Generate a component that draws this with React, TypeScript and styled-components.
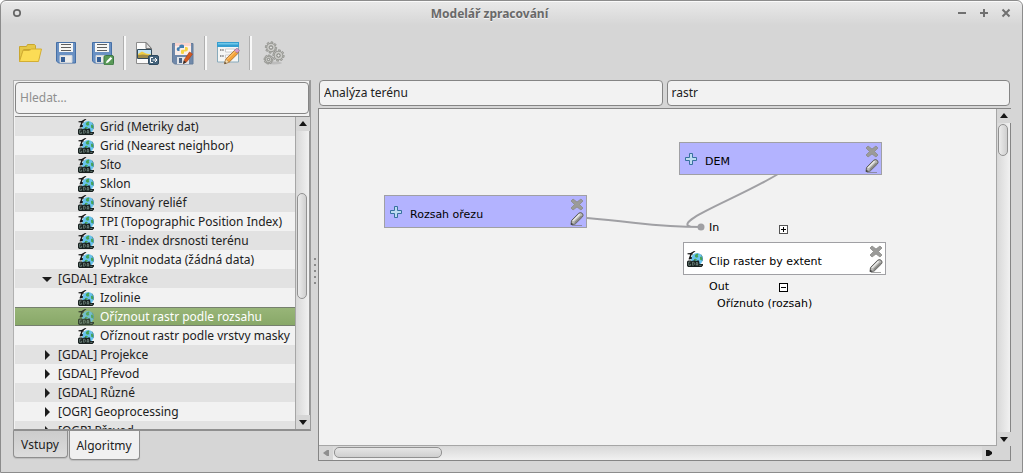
import React from "react";
import styled, { createGlobalStyle, css } from "styled-components";

const Global = createGlobalStyle`
  *, *::before, *::after { box-sizing: border-box; }
  html, body, #root { height: 100%; }
  body { margin: 0; background: #fff; overflow: hidden; }
  body, button, input { font-family: "Noto Sans", "Open Sans", sans-serif; font-size: 12px; color: #212121; }
  button { border: 0; padding: 0; background: none; }
  ul { list-style: none; margin: 0; padding: 0; }
  svg { display: block; flex: none; }
`;

const Window = styled.main`
  display: flex;
  flex-direction: column;
  height: 100%;
  border: 1px solid #8c8c8c;
  border-radius: 6px 6px 0 0;
  background: linear-gradient(#e9e9e9, #d6d6d6 24px);
  box-shadow: inset 0 1px 0 #fafafa;
`;

const TitleBar = styled.header`
  display: flex;
  align-items: center;
  height: 24px;
  padding: 0 9px;
  flex: none;
`;

const Title = styled.h1`
  flex: 1;
  margin: 0;
  padding-top: 2px;
  text-align: center;
  font-size: 12px;
  line-height: 18px;
  font-weight: 700;
  color: #696969;
  text-shadow: 0 1px 0 #f4f4f4;
`;

const WindowButtons = styled.div`
  display: flex;
  gap: 8px;
`;

const WindowButton = styled.button`
  width: 14px;
  height: 14px;
`;

const Toolbar = styled.div`
  display: flex;
  align-items: center;
  height: 55px;
  padding: 0 11px;
  flex: none;
`;

const ToolButton = styled.button`
  display: grid;
  place-items: center;
  width: 36px;
  height: 36px;
`;

const ToolSeparator = styled.span`
  width: 3px;
  height: 34px;
  margin: 0 3px;
  border-left: 1px solid #b0b0b0;
  border-right: 2px solid #f8f8f8;
`;

const Body = styled.div`
  display: flex;
  flex: 1;
  min-height: 0;
  padding: 0 11px 11px 12px;
`;

const Sidebar = styled.aside`
  display: flex;
  flex-direction: column;
  width: 298px;
  flex: none;
`;

const AlgorithmPanel = styled.section`
  display: flex;
  flex-direction: column;
  flex: 1;
  min-height: 0;
  gap: 2px;
  border: 1px solid #b0b0b0;
  border-right: 2px solid #999;
  border-bottom: 2px solid #8f8f8f;
  padding: 1px 0 0 1px;
  background: #f2f2f2;
`;

const TextInput = styled.input<{ $large?: boolean }>`
  flex: ${(p) => (p.$large ? "none" : "1")};
  min-width: 0;
  height: ${(p) => (p.$large ? 32 : 26)}px;
  padding: 0 4px 2px;
  border: 1px solid #858585;
  border-radius: 4px;
  background: #f2f2f2;
  outline: 0;
  &::placeholder { color: #8f8f8f; opacity: 1; }
`;

const TreeFrame = styled.div`
  display: flex;
  flex: 1;
  min-height: 0;
  border-top: 1px solid #8a8a8a;
`;

const Tree = styled.ul`
  flex: 1;
  min-width: 0;
  overflow: hidden;
`;

const TreeRow = styled.li<{ $group?: boolean; $selected?: boolean }>`
  display: flex;
  align-items: center;
  gap: 6px;
  height: 19px;
  padding-left: ${(p) => (p.$group ? 27 : 63)}px;
  line-height: 18px;
  white-space: nowrap;
  background: #f2f2f2;
  &:nth-child(odd) { background: #e2e2e2; }
  ${(p) => p.$selected && css`
    && {
      color: #fff;
      background: linear-gradient(#98b578, #88a868);
      border-top: 1px solid #76806e;
      border-bottom: 1px solid #76806e;
    }
    svg { opacity: 0.75; }
  `}
`;

const Bar = styled.div<{ $horizontal?: boolean }>`
  display: flex;
  flex: none;
  ${(p) => p.$horizontal
    ? css`height: 15px; flex-direction: row; background: linear-gradient(#d8d8d8, #f1f1f1); border-top: 1px solid #a6a6a6;`
    : css`width: 14px; flex-direction: column; background: linear-gradient(90deg, #d8d8d8, #f1f1f1); border-left: 1px solid #a6a6a6;`}
`;

const BarButton = styled.button`
  display: grid;
  place-items: center;
  width: 14px;
  height: 14px;
  flex: none;
  background: #d6d6d6;
`;

const Track = styled.div<{ $horizontal?: boolean; $before: number }>`
  display: flex;
  flex: 1;
  min-width: 0;
  min-height: 0;
  flex-direction: ${(p) => (p.$horizontal ? "row" : "column")};
  padding: ${(p) => (p.$horizontal ? `1px 1px 2px ${p.$before}px` : `${p.$before}px 2px 1px 1px`)};
`;

const Thumb = styled.span<{ $horizontal?: boolean; $length: number }>`
  border: 1px solid #919191;
  border-radius: 5px;
  ${(p) => p.$horizontal
    ? css`width: ${p.$length}px; background: linear-gradient(#e6e6e6, #cfcfcf);`
    : css`height: ${p.$length}px; background: linear-gradient(90deg, #ececec, #cfcfcf);`}
`;

const Tabs = styled.div`
  display: flex;
  align-items: flex-start;
  gap: 1px;
  height: 30px;
  flex: none;
`;

const Tab = styled.button<{ $active?: boolean }>`
  width: ${(p) => (p.$active ? 71 : 55)}px;
  height: ${(p) => (p.$active ? 29 : 27)}px;
  padding: 1px 1px 0 0;
  border: 1px solid #8e8e8e;
  border-top: 0;
  border-radius: 0 0 4px 4px;
  background: ${(p) => (p.$active ? "#f0f0f0" : "linear-gradient(#cccccc, #dcdcdc)")};
  box-shadow: 0 1px 1px #bcbcbc;
`;

const Splitter = styled.div`
  display: flex;
  flex-direction: column;
  align-items: center;
  justify-content: center;
  gap: 4px;
  width: 7px;
  flex: none;
  i { width: 2px; height: 2px; background: #8a8a8a; }
`;

const Editor = styled.section`
  display: flex;
  flex-direction: column;
  flex: 1;
  min-width: 0;
  gap: 2px;
`;

const Fields = styled.div`
  display: flex;
  gap: 4px;
  padding: 0 1px;
  flex: none;
`;

const CanvasFrame = styled.div`
  display: flex;
  flex: 1;
  min-height: 0;
  border: 1px solid #858585;
  background: #d6d6d6;
`;

const CanvasColumn = styled.div`
  display: flex;
  flex-direction: column;
  flex: 1;
  min-width: 0;
`;

const VerticalColumn = styled.div`
  display: flex;
  padding-bottom: 14px;
`;

const Canvas = styled.div`
  position: relative;
  flex: 1;
  overflow: hidden;
  background: #f2f2f2;
  font-family: "DejaVu Sans", sans-serif;
  font-size: 11px;
  line-height: 14px;
  color: #000;
`;

const Links = styled.svg`
  position: absolute;
  inset: 0;
`;

const Placed = styled.div<{ $x: number; $y: number }>`
  position: absolute;
  left: ${(p) => p.$x}px;
  top: ${(p) => p.$y}px;
`;

const NodeBox = styled.div<{ $input?: boolean }>`
  display: flex;
  align-items: center;
  gap: ${(p) => (p.$input ? 8 : 6)}px;
  width: 203px;
  height: 33px;
  padding: 0 1px 0 ${(p) => (p.$input ? 5 : 3)}px;
  border: 1px solid #a0a0a4;
  background: ${(p) => (p.$input ? "#b3b3ff" : "#fff")};
`;

const NodeLabel = styled.span`
  flex: 1;
  padding-top: 6px;
  white-space: nowrap;
`;

const NodeTools = styled.span`
  display: flex;
  flex-direction: column;
  button { display: grid; place-items: center; width: 16px; height: 15px; }
`;

const PortRow = styled.div`
  display: flex;
  align-items: center;
  justify-content: space-between;
  width: 105px;
  height: 24px;
  padding-left: 26px;
`;

const InputPort = styled(PortRow)`
  height: 21px;
  align-items: flex-start;
  button { margin-top: 4px; }
`;

const Toggle = styled.button`
  width: 9px;
  height: 9px;
`;

const OutputName = styled.div`
  padding-left: 34px;
  margin-top: -2px;
  white-space: nowrap;
`;

const PortGroup = styled.div`
  display: flex;
  flex-direction: column;
`;

const GdalIcon = () => (
  <svg width="16" height="16" viewBox="0 0 16 16">
    <circle cx="10" cy="8" r="6" fill="#68c3ee" />
    <path d="M8.500 3.500l2-1 1 .8-.8 1 .6 1.500-1.300 1-1.500-.5-.8-1.300zM13 6l1.500-.5 1 2.500-.8 1.500-1.500-.8zM7 8l1.800-.2 1.200 1-1 1H7z" fill="#45a252" />
    <path d="M14 3.500q2.300 2.500 1.700 6.500" fill="none" stroke="#4a8596" strokeWidth=".7" />
    <path d="M7 0l1.500.3-3 2.200.5 1.100-1.200-.1-1 2.300L5 6.500v1L3 8.500l-1.500-.3 1.700-4.600L.5 3.200v-.9l3-.4z" fill="#151515" />
    <path d="M0 11q0-1.500 1.500-1.500H4l.8.800 1.200-.8h2l1 .8 1-.8h2l.6 3.500H16v1.500L14.500 16H1l-1-1.200z" fill="#18201f" />
    <path d="M3.500 11H1.700v3.300h1.900v-1.500M5.600 11v3.300h.8l.9-.9v-1.500l-.8-.9zM9.200 14.600v-2.600l.7-1 .8 1v2.600M9.300 13.300h1.300M12.300 14.400h2.100" fill="none" stroke="#94aea5" strokeWidth=".6" />
  </svg>
);

const GroupArrow = ({ open }: { open?: boolean }) => (
  <svg width="10" height="10" viewBox="0 0 10 10">
    <path d={open ? "M0 3h10L5 8z" : "M3 0v10l5-5z"} fill="#1c1c1c" />
  </svg>
);

const arrows = { up: "M4 1l4 5H0z", down: "M0 2h8L4 7z", left: "M7 1v6H5L1 4l4-3z", right: "M1 1v6h3l3-2V3L4 1z" };
const ArrowGlyph = ({ dir, dim }: { dir: keyof typeof arrows; dim?: boolean }) => (
  <svg width="8" height="8" viewBox="0 0 8 8"><path d={arrows[dir]} fill={dim ? "#8f8f8f" : "#151515"} /></svg>
);

const FolderIcon = () => (
  <svg width="24" height="24" viewBox="0 0 24 24">
    <path d="M1.500 20.500V5.500h7l1-2h7l1 1v4h-12z" fill="#e6c847" stroke="#c9a62f" />
    <path d="M1.500 20.500l3.500-11h6.500l2-1.500h10l-3 12.500z" fill="#fcdc55" stroke="#d3ae33" strokeLinejoin="round" />
  </svg>
);

const Floppy = () => (
  <>
    <path d="M2.500 1.500h19v20.500h-17l-2-2z" fill="#6a91c3" stroke="#4670a7" strokeLinejoin="round" />
    <path d="M5 2h14v9H5z" fill="#f6f6f4" />
    <path d="M7 3.500h10M7 6.500h10M7 9.500h10" stroke="#5e5e5e" />
    <path d="M6 14.500h12v7H6z" fill="#ececeb" stroke="#d1d5da" />
    <path d="M7 16h4v5H7z" fill="#365f96" />
  </>
);

const SaveIcon = () => <svg width="24" height="24" viewBox="0 0 24 24"><Floppy /></svg>;

const SaveAsIcon = () => (
  <svg width="24" height="24" viewBox="0 0 24 24">
    <Floppy />
    <rect x="14" y="14.500" width="9.500" height="9.500" rx="1.500" fill="#5a9a58" stroke="#3c7745" />
    <path d="M16 22.300l.6-2.300 4-4 1.600 1.500-4 4z" fill="#fff" />
  </svg>
);

const ExportIcon = () => (
  <svg width="24" height="24" viewBox="0 0 24 24">
    <path d="M1.500 1.500H11l5.500 6v15h-15z" fill="#fbfbfb" stroke="#8c8c8c" />
    <path d="M11 1.500v6h5.500z" fill="#dfdfdf" stroke="#777" />
    <path d="M2.500 8.500h14v9h-14z" fill="#c1e1f3" stroke="#334b5a" />
    <path d="M3 13l4-2.500 4 2 5 1v1H3z" fill="#efcd43" /><path d="M3 14l5-.5 8 1V17H3z" fill="#9d8a48" />
    <rect x="13.500" y="14.500" width="10" height="9" rx="1.500" fill="#46647c" stroke="#2d495f" />
    <path d="M18 16.500h-2.500v5H18M17.500 19h4.500M20 17l2 2-2 2" fill="none" stroke="#fff" />
  </svg>
);

const PythonIcon = () => (
  <svg width="24" height="24" viewBox="0 0 24 24">
    <path d="M1.500 2.500h20.500V23H3.500l-2-2z" fill="#7189aa" stroke="#657c9b" />
    <path d="M4 2h16v12H4z" fill="#fbeee9" /><path d="M4 2h16v3H4z" fill="#fbd5ce" />
    <path d="M6 16h12v7H6z" fill="#e2e4e7" /><path d="M8 17h3v5H8z" fill="#4c6485" />
    <path d="M8.500 10V8q0-1 1.500-1h3V4.500q-.2-1-2.500-1T8.300 5v1.300H7Q5.500 6.500 5.700 8.500 6 10.500 8.500 10z" fill="#427eb1" />
    <path d="M10 12.300V10q0-1.300 1.500-1.300H14V6h1.500q1.500 0 1.500 2t-2 2.500h-2V12q0 1-1.500 1T10 12.300z" fill="#f7d343" />
    <path d="M12.500 22.500l1-4 5-7.500 3 2-5.500 7.500z" fill="#d55a20" stroke="#a94420" strokeWidth=".7" />
    <path d="M12 23l.8-3.500 2.500 1.800z" fill="#313131" />
  </svg>
);

const FormIcon = () => (
  <svg width="24" height="24" viewBox="0 0 24 24">
    <path d="M1.500 1.500h21V21h-21z" fill="#f5f6f5" stroke="#88aabb" />
    <path d="M1 1h22v5H1z" fill="#359ed0" /><path d="M2 2h20v1.500H2z" fill="#70c8e9" />
    <path d="M4 9h4M4 15h4" stroke="#999" strokeWidth="2" strokeDasharray="1.500 .7" />
    <path d="M9.500 8h9v3h-9zM9.500 14h6v3h-6z" fill="#fff" stroke="#c2c2c2" strokeWidth=".8" />
    <path d="M8.500 22.700l1.300-4.600L19.500 8.500l3.200 3.200-9.600 9.500z" fill="#f6a43b" stroke="#a46829" strokeWidth=".8" />
    <path d="M18.200 9.700l2-2.200q2-.6 3.300 2.200L21.300 12z" fill="#d99acb" stroke="#937294" strokeWidth=".7" />
    <path d="M8.500 22.700l1.300-4.600 3.300 3.100z" fill="#f3ddb2" stroke="#98764e" strokeWidth=".5" /><path d="M8.500 22.700l.5-1.700 1.200 1.200z" fill="#222" />
    <path d="M11 18.500l8.500-8.500" stroke="#ffd489" />
  </svg>
);

const Gear = ({ x, y, r }: { x: number; y: number; r: number }) => (
  <g transform={`translate(${x} ${y})`}>
    {Array.from({ length: 8 }, (_, i) => (
      <rect key={i} x="-1" y={-r - 1.2} width="2" height="3" fill="#b8b8b5" stroke="#858681" strokeWidth=".6" transform={`rotate(${i * 45 + 10})`} />
    ))}
    <circle r={r - 0.4} fill="#bdbdb9" stroke="#858681" strokeWidth=".5" />
    <circle r={r - 1.3} fill="none" stroke="#d3d3d0" strokeWidth=".8" />
    <circle r={r * 0.36} fill="#e1e1df" stroke="#72736f" strokeWidth=".8" />
  </g>
);

const GearsIcon = () => (
  <svg width="24" height="24" viewBox="0 0 24 24">
    <ellipse cx="13" cy="22" rx="8" ry="1.500" fill="#bdbdbd" />
    <Gear x={10} y={6.5} r={4.5} /><Gear x={17.500} y={14.500} r={4.500} /><Gear x={7.500} y={18.500} r={3.300} />
  </svg>
);

const PlusIcon = () => (
  <svg width="12" height="12" viewBox="0 0 12 12">
    <path d="M4.500.5h3v4h4v3h-4v4h-3v-4h-4v-3h4z" fill="#bddcf1" stroke="#39719f" />
  </svg>
);

const CrossIcon = () => (
  <svg width="14" height="13" viewBox="0 0 14 13">
    <path d="M1 3l2-2 4 3 4-3 2 2-3.500 3.500L13 10l-2 2-4-3-4 3-2-2 3.500-3.500z" fill="#9b9b99" stroke="#8b8b89" strokeWidth=".8" strokeLinejoin="round" />
  </svg>
);

const PencilIcon = () => (
  <svg width="14" height="14" viewBox="0 0 14 14">
    <path d="M2 13.500h10" stroke="#777" strokeOpacity=".65" />
    <path d="M1 12.700l.5-4.200L8.700 1.200q2-1.300 3.600.2 1.500 1.600.2 3.400L5.200 12z" fill="#b9b9b6" stroke="#5c5c5a" strokeLinejoin="round" />
    <path d="M3 8.900l6.700-6.600" stroke="#ececea" strokeWidth="1.300" />
    <path d="M4.800 10.700L11.700 4" stroke="#858582" strokeWidth="1.300" /><path d="M1 12.700l.4-2 1.600 1.400z" fill="#333" />
  </svg>
);

const ToggleGlyph = ({ plus }: { plus?: boolean }) => (
  <svg width="9" height="9" viewBox="0 0 9 9" shapeRendering="crispEdges">
    <rect x=".5" y=".5" width="8" height="8" fill="#fff" stroke={plus ? "#555" : "#000"} />
    <path d={plus ? "M2 4.500h5M4.500 2v5" : "M2 4.500h5"} stroke="#000" />
  </svg>
);

const ScrollBar = ({ horizontal, before, length, dim }: { horizontal?: boolean; before: number; length: number; dim?: boolean }) => (
  <Bar $horizontal={horizontal}>
    <BarButton aria-label={horizontal ? "Doleva" : "Nahoru"}><ArrowGlyph dir={horizontal ? "left" : "up"} dim={dim} /></BarButton>
    <Track $horizontal={horizontal} $before={before}><Thumb $horizontal={horizontal} $length={length} /></Track>
    <BarButton aria-label={horizontal ? "Doprava" : "Dolů"}><ArrowGlyph dir={horizontal ? "right" : "down"} /></BarButton>
  </Bar>
);

const ModelNode = ({ label, input }: { label: string; input?: boolean }) => (
  <NodeBox $input={input}>
    {input ? <PlusIcon /> : <GdalIcon />}
    <NodeLabel>{label}</NodeLabel>
    <NodeTools>
      <button aria-label={`Odstranit ${label}`}><CrossIcon /></button>
      <button aria-label={`Upravit ${label}`}><PencilIcon /></button>
    </NodeTools>
  </NodeBox>
);

type Item = { label: string; group?: boolean; open?: boolean; selected?: boolean };
const items: Item[] = [
  { label: "Grid (Metriky dat)" },
  { label: "Grid (Nearest neighbor)" },
  { label: "Síto" },
  { label: "Sklon" },
  { label: "Stínovaný reliéf" },
  { label: "TPI (Topographic Position Index)" },
  { label: "TRI - index drsnosti terénu" },
  { label: "Vyplnit nodata (žádná data)" },
  { label: "[GDAL] Extrakce", group: true, open: true },
  { label: "Izolinie" },
  { label: "Oříznout rastr podle rozsahu", selected: true },
  { label: "Oříznout rastr podle vrstvy masky" },
  { label: "[GDAL] Projekce", group: true },
  { label: "[GDAL] Převod", group: true },
  { label: "[GDAL] Různé", group: true },
  { label: "[OGR] Geoprocessing", group: true },
  { label: "[OGR] Převod", group: true },
];

export default function App() {
  return (
    <>
      <Global />
      <Window>
        <TitleBar>
          <WindowButtons>
            <WindowButton aria-label="Nabídka okna">
              <svg width="14" height="14" viewBox="0 0 14 14"><circle cx="7" cy="7" r="3.200" fill="none" stroke="#666" strokeWidth="1.700" /></svg>
            </WindowButton>
          </WindowButtons>
          <Title>Modelář zpracování</Title>
          <WindowButtons>
            <WindowButton aria-label="Minimalizovat"><svg width="14" height="14"><path d="M3 7h8" stroke="#707070" strokeWidth="2" /></svg></WindowButton>
            <WindowButton aria-label="Maximalizovat"><svg width="14" height="14"><path d="M3 7h8M7 3v8" stroke="#707070" strokeWidth="2" /></svg></WindowButton>
            <WindowButton aria-label="Zavřít"><svg width="14" height="14"><path d="M3.500 3.500l7 7M10.500 3.500l-7 7" stroke="#707070" strokeWidth="2" /></svg></WindowButton>
          </WindowButtons>
        </TitleBar>
        <Toolbar role="toolbar">
          <ToolButton aria-label="Otevřít"><FolderIcon /></ToolButton>
          <ToolButton aria-label="Uložit"><SaveIcon /></ToolButton>
          <ToolButton aria-label="Uložit jako"><SaveAsIcon /></ToolButton>
          <ToolSeparator />
          <ToolButton aria-label="Exportovat obrázek"><ExportIcon /></ToolButton>
          <ToolButton aria-label="Exportovat Python"><PythonIcon /></ToolButton>
          <ToolSeparator />
          <ToolButton aria-label="Upravit nápovědu"><FormIcon /></ToolButton>
          <ToolSeparator />
          <ToolButton aria-label="Spustit"><GearsIcon /></ToolButton>
        </Toolbar>
        <Body>
          <Sidebar>
            <AlgorithmPanel>
              <TextInput $large placeholder="Hledat…" aria-label="Hledat" />
              <TreeFrame>
                <Tree role="tree">
                  {items.map((item) => (
                    <TreeRow key={item.label} role="treeitem" $group={item.group} $selected={item.selected}>
                      {item.group ? <GroupArrow open={item.open} /> : <GdalIcon />}
                      <span>{item.label}</span>
                    </TreeRow>
                  ))}
                </Tree>
                <ScrollBar before={62} length={106} />
              </TreeFrame>
            </AlgorithmPanel>
            <Tabs role="tablist">
              <Tab role="tab">Vstupy</Tab>
              <Tab role="tab" $active>Algoritmy</Tab>
            </Tabs>
          </Sidebar>
          <Splitter><i /><i /><i /><i /><i /></Splitter>
          <Editor>
            <Fields>
              <TextInput defaultValue="Analýza terénu" aria-label="Název modelu" />
              <TextInput defaultValue="rastr" aria-label="Skupina" />
            </Fields>
            <CanvasFrame>
              <CanvasColumn>
                <Canvas>
                  <Links width="600" height="300">
                    <path d="M268 109C325 114 340 118 382 118M459 65C420 89 352 113 372 118H382" fill="none" stroke="#a0a0a4" strokeWidth="2" />
                    <circle cx="382" cy="118" r="3.500" fill="#a0a0a4" />
                  </Links>
                  <Placed $x={65} $y={86}><ModelNode input label="Rozsah ořezu" /></Placed>
                  <Placed $x={360} $y={33}><ModelNode input label="DEM" /></Placed>
                  <Placed $x={364} $y={112}>
                    <PortGroup>
                      <InputPort><span>In</span><Toggle aria-label="Rozbalit vstupy"><ToggleGlyph plus /></Toggle></InputPort>
                      <ModelNode label="Clip raster by extent" />
                      <PortRow><span>Out</span><Toggle aria-label="Sbalit výstupy"><ToggleGlyph /></Toggle></PortRow>
                      <OutputName>Oříznuto (rozsah)</OutputName>
                    </PortGroup>
                  </Placed>
                </Canvas>
                <ScrollBar horizontal before={1} length={108} dim />
              </CanvasColumn>
              <VerticalColumn><ScrollBar before={1} length={32} /></VerticalColumn>
            </CanvasFrame>
          </Editor>
        </Body>
      </Window>
    </>
  );
}
